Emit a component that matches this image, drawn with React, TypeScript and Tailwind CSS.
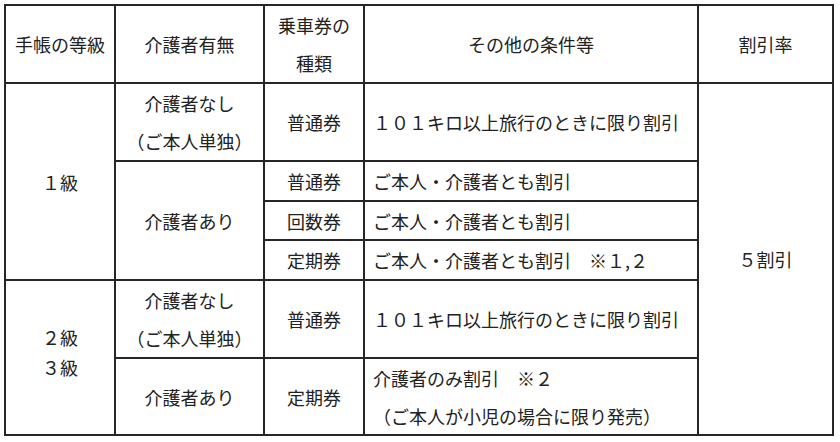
const cell = "bg-white flex items-center justify-center text-center";
const left = "bg-white flex flex-col justify-center pl-2";

export default function App() {
    return (
        <div
            className="w-[840px] h-[442px] bg-white text-[#222] text-[18px] leading-[38px]"
            style={{ fontFamily: '"Noto Sans CJK JP", "Noto Sans", sans-serif' }}
        >
            <div className="ml-[4px] pt-[4px]">
                <div className="inline-grid grid-cols-[108px_147px_98px_332px_133px] grid-rows-[76px_76px_38px_37px_38px_76px_75px] gap-[2px] p-[2px] bg-[#262626]">
                    {/* 見出し */}
                    <div className={cell}>手帳の等級</div>
                    <div className={cell}>介護者有無</div>
                    <div className={`${cell} flex-col`}>
                        <span>乗車券の</span>
                        <span>種類</span>
                    </div>
                    <div className={cell}>その他の条件等</div>
                    <div className={cell}>割引率</div>

                    {/* 1級 */}
                    <div className={`${cell} row-span-4`}>１級</div>
                    <div className={`${cell} flex-col`}>
                        <span>介護者なし</span>
                        <span>（ご本人単独）</span>
                    </div>
                    <div className={cell}>普通券</div>
                    <div className={left}>１０１キロ以上旅行のときに限り割引</div>
                    <div className={`${cell} row-span-6`}>５割引</div>

                    <div className={`${cell} row-span-3`}>介護者あり</div>
                    <div className={cell}>普通券</div>
                    <div className={left}>ご本人・介護者とも割引</div>
                    <div className={cell}>回数券</div>
                    <div className={left}>ご本人・介護者とも割引</div>
                    <div className={cell}>定期券</div>
                    <div className={left}>ご本人・介護者とも割引　※１,２</div>

                    {/* 2級・3級 */}
                    <div className={`${cell} row-span-2 flex-col leading-[30px] pb-[12px]`}>
                        <span>２級</span>
                        <span>３級</span>
                    </div>
                    <div className={`${cell} flex-col`}>
                        <span>介護者なし</span>
                        <span>（ご本人単独）</span>
                    </div>
                    <div className={cell}>普通券</div>
                    <div className={left}>１０１キロ以上旅行のときに限り割引</div>

                    <div className={cell}>介護者あり</div>
                    <div className={cell}>定期券</div>
                    <div className={left}>
                        <span>介護者のみ割引　※２</span>
                        <span>（ご本人が小児の場合に限り発売）</span>
                    </div>
                </div>
            </div>
        </div>
    );
}
